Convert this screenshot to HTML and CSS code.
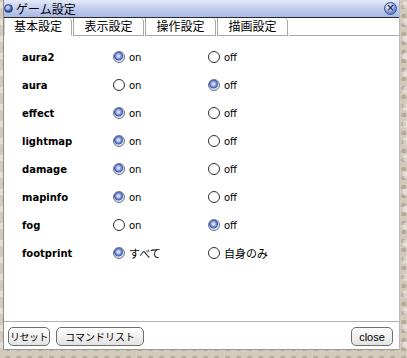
FILE: index.html
```html
<!DOCTYPE html>
<html>
<head>
<meta charset="utf-8">
<link rel="stylesheet" href="styles.css">
</head>
<body>
<div class="win">
  <div class="titlebar">
    <span class="ticon"></span>
    <span class="ttext">ゲーム設定</span>
    <span class="tclose">×</span>
  </div>
  <div class="tabs">
    <div class="tab active">基本設定</div>
    <div class="tab">表示設定</div>
    <div class="tab">操作設定</div>
    <div class="tab">描画設定</div>
    <div class="tabfill"></div>
  </div>
  <div class="content">
    <div class="row"><span class="label">aura2</span><span class="opt"><i class="radio on"></i>on</span><span class="opt"><i class="radio"></i>off</span></div>
    <div class="row"><span class="label">aura</span><span class="opt"><i class="radio"></i>on</span><span class="opt"><i class="radio on"></i>off</span></div>
    <div class="row"><span class="label">effect</span><span class="opt"><i class="radio on"></i>on</span><span class="opt"><i class="radio"></i>off</span></div>
    <div class="row"><span class="label">lightmap</span><span class="opt"><i class="radio on"></i>on</span><span class="opt"><i class="radio"></i>off</span></div>
    <div class="row"><span class="label">damage</span><span class="opt"><i class="radio on"></i>on</span><span class="opt"><i class="radio"></i>off</span></div>
    <div class="row"><span class="label">mapinfo</span><span class="opt"><i class="radio on"></i>on</span><span class="opt"><i class="radio"></i>off</span></div>
    <div class="row"><span class="label">fog</span><span class="opt"><i class="radio"></i>on</span><span class="opt"><i class="radio on"></i>off</span></div>
    <div class="row"><span class="label">footprint</span><span class="opt jp"><i class="radio on"></i>すべて</span><span class="opt jp"><i class="radio"></i>自身のみ</span></div>
  </div>
  <div class="footer">
    <button class="btn reset">リセット</button>
    <button class="btn wide">コマンドリスト</button>
    <span class="spacer"></span>
    <button class="btn latin">close</button>
  </div>
</div>
</body>
</html>
```
FILE: styles.css
```css
html, body {
  margin: 0;
  padding: 0;
}
body {
  width: 407px;
  height: 358px;
  background-color: #d2cbbb;
  background-image:
    radial-gradient(circle at 20% 30%, rgba(255,255,255,0.4) 0 3px, transparent 4px),
    radial-gradient(circle at 70% 80%, rgba(120,110,95,0.35) 0 2px, transparent 3px);
  background-size: 13px 17px, 11px 9px;
  font-family: "Noto Sans CJK JP", "DejaVu Sans", sans-serif;
  overflow: hidden;
  padding: 0 7px 8px 3px;
  box-sizing: border-box;
}
.win {
  height: 350px;
  background: #fff;
  border-left: 1px solid #8c8c8c;
  border-right: 1px solid #b8b8b8;
  border-bottom: 1px solid #9a9a9a;
  display: flex;
  flex-direction: column;
  box-sizing: border-box;
}
.titlebar {
  height: 18px;
  background: linear-gradient(#e3e9f8 0%, #c5d0f0 45%, #a9b9e6 100%);
  border-bottom: 1px solid #2a2a2a;
  display: flex;
  align-items: center;
  box-sizing: border-box;
}
.ticon {
  width: 7px;
  height: 7px;
  border-radius: 50%;
  background: radial-gradient(circle at 40% 35%, #c9d6fa 0 1px, #5a76c4 3px, #2f4c9c 4px);
  border: 1px solid #2d4583;
  margin-right: 3px;
}
.ttext {
  font-size: 12px;
  color: #000;
  line-height: 16px;
  flex: 1;
}
.tclose {
  width: 11px;
  height: 11px;
  border-radius: 50%;
  background: radial-gradient(circle at 40% 35%, #e6ecff 0 2px, #6f88cf 6px);
  border: 1px solid #3a4f8c;
  color: #1b2a5a;
  font-size: 10px;
  line-height: 10px;
  text-align: center;
  font-family: "DejaVu Sans", sans-serif;
  font-weight: bold;
  margin-right: 2px;
}
.tabs {
  display: flex;
  height: 18px;
  gap: 1px;
  align-items: flex-end;
}
.tab {
  height: 18px;
  width: 71px;
  box-sizing: border-box;
  border: 1px solid #a8a8a8;
  border-top: none;
  border-top-right-radius: 4px;
  font-size: 12px;
  line-height: 16px;
  text-align: center;
  color: #000;
  background: #fff;
}
.tab.active {
  width: 68px;
  border-left: 1px solid #d0d0d0;
  border-bottom-color: #fff;
}
.tabfill {
  flex: 1;
  height: 18px;
  border-bottom: 1px solid #a8a8a8;
  box-sizing: border-box;
}
.content {
  flex: 1;
  padding: 7px 0 0 18px;
}
.row {
  display: flex;
  align-items: center;
  height: 28px;
}
.label {
  width: 91px;
  font-family: "DejaVu Sans", sans-serif;
  font-weight: bold;
  font-size: 10px;
  color: #000;
}
.opt {
  width: 95px;
  display: flex;
  align-items: center;
  font-family: "DejaVu Sans", "Noto Sans CJK JP", sans-serif;
  font-size: 10px;
  color: #000;
}
.opt.jp {
  font-family: "Noto Sans CJK JP", sans-serif;
  font-size: 11px;
}
.radio {
  width: 12px;
  height: 12px;
  border-radius: 50%;
  border: 1px solid #2c2c2c;
  box-sizing: border-box;
  background: #fff;
  margin-right: 4px;
  display: inline-block;
}
.radio.on {
  border-color: #6a7390;
  background: radial-gradient(circle at 45% 40%, #d4defc 0 1px, #6c88d8 3px, #3d57aa 4px, #aab4cc 4.6px, #e3e6ee 5px);
}
.footer {
  height: 28px;
  border-top: 1px solid #b0b0b0;
  display: flex;
  align-items: center;
  padding: 2px 6px 0 4px;
  gap: 6px;
  background: #fff;
  box-sizing: border-box;
}
.spacer { flex: 1; }
.btn {
  height: 19px;
  padding: 0;
  border: 1px solid #6e6e6e;
  border-radius: 5px;
  background: linear-gradient(#fefefe, #e2e2e2);
  font-family: "Noto Sans CJK JP", "DejaVu Sans", sans-serif;
  font-size: 10px;
  line-height: 16px;
  color: #000;
  margin: 0;
  white-space: nowrap;
}
.btn.reset {
  width: 42px;
  letter-spacing: -0.5px;
}
.btn.wide {
  width: 88px;
}
.btn.latin {
  font-family: "Liberation Sans", sans-serif;
  font-size: 11px;
  width: 42px;
}
```
